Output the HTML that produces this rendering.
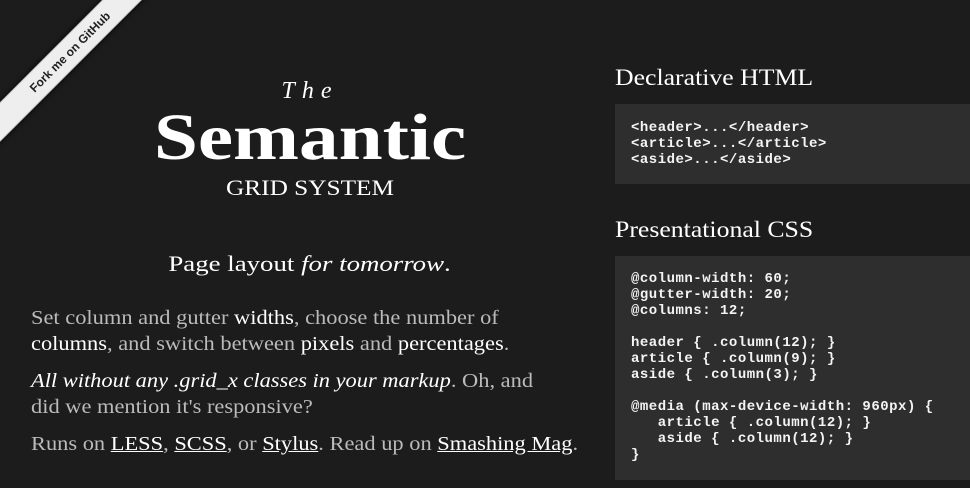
<!DOCTYPE html>
<html><head><meta charset="utf-8"><style>
html,body{margin:0;padding:0}
body{width:970px;height:488px;overflow:hidden;position:relative;background:#1c1c1c;font-family:"Liberation Serif",serif;color:#bbb}
.a{position:absolute;white-space:nowrap}
.c{text-align:center;left:0;width:620px}
h2{margin:0;font-weight:normal;color:#fff;font-size:23px;transform-origin:0 0;transform:scaleX(1.12)}
pre{margin:0;position:absolute;left:615px;width:355px;background:#2e2e2e;color:#f4f4f4;font-family:"Liberation Mono",monospace;font-weight:bold;font-size:14px;letter-spacing:0.5px;line-height:16px;padding:0 0 0 16px;box-sizing:border-box}
p{margin:0}
.w{color:#fff}
a{color:#fff;text-decoration:underline}
.rib{position:absolute;left:-45px;top:38px;width:230px;height:26px;background:#eee;transform:rotate(-45deg);text-align:center;font-family:"Liberation Sans",sans-serif;font-weight:bold;font-size:12px;line-height:26px;color:#222;box-shadow:0 0 6px #000;border-top:1px solid #ccc;border-bottom:1px solid #ccc}
</style></head><body>
<div class="rib">Fork me on GitHub</div>
<div class="a c" style="top:78px;font-size:24px;font-style:italic;letter-spacing:7px;color:#fff">The</div>
<div class="a c" style="top:100px;font-size:66px;font-weight:bold;color:#fff;transform:scaleX(1.2);transform-origin:310px 0">Semantic</div>
<div class="a c" style="top:175px;font-size:22px;color:#fff;transform:scaleX(1.15);transform-origin:310px 0">GRID SYSTEM</div>
<div class="a c" style="top:251px;font-size:22px;color:#fff;transform:scaleX(1.22);transform-origin:312px 0">Page layout <i>for tomorrow</i>.</div>
<div class="a" style="left:31px;top:306px;font-size:19.5px;line-height:26px;transform:scaleX(1.15);transform-origin:0 0">
<p>Set column and gutter <span class="w">widths</span>, choose the number of<br><span class="w">columns</span>, and switch between <span class="w">pixels</span> and <span class="w">percentages</span>.</p>
<p style="margin-top:11px"><i class="w">All without any .grid_x classes in your markup</i>. Oh, and<br>did we mention it's responsive?</p>
<p style="margin-top:11px">Runs on <a>LESS</a>, <a>SCSS</a>, or <a>Stylus</a>. Read up on <a>Smashing Mag</a>.</p>
</div>
<h2 class="a" style="left:615px;top:65px">Declarative HTML</h2>
<pre style="top:104px;height:80px;padding-top:16px">&lt;header&gt;...&lt;/header&gt;
&lt;article&gt;...&lt;/article&gt;
&lt;aside&gt;...&lt;/aside&gt;</pre>
<h2 class="a" style="left:615px;top:217px">Presentational CSS</h2>
<pre style="top:256px;height:224px;padding-top:15px">@column-width: 60;
@gutter-width: 20;
@columns: 12;

header { .column(12); }
article { .column(9); }
aside { .column(3); }

@media (max-device-width: 960px) {
   article { .column(12); }
   aside { .column(12); }
}</pre>
</body></html>
